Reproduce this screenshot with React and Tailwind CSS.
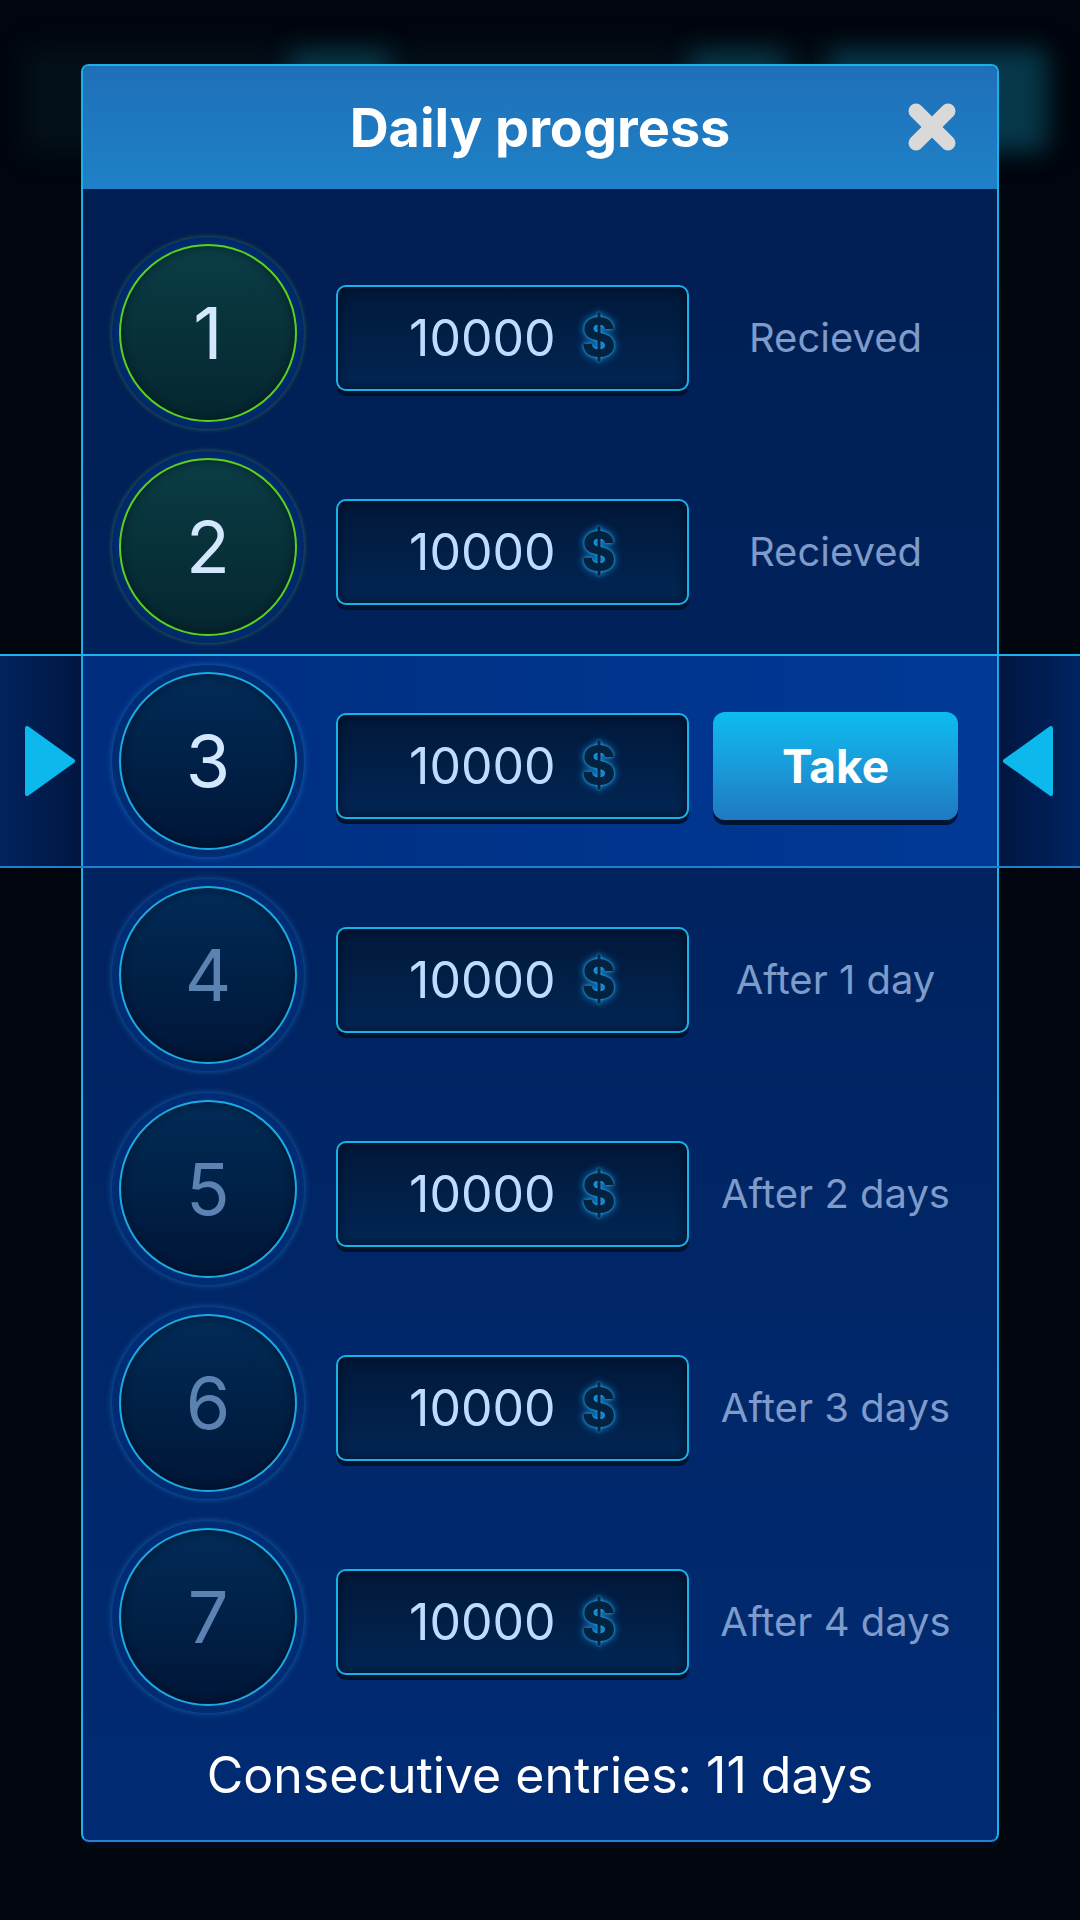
import React from 'react';

const days = [
  { n: 1, state: 'received', label: 'Recieved' },
  { n: 2, state: 'received', label: 'Recieved' },
  { n: 3, state: 'today' },
  { n: 4, state: 'locked', label: 'After 1 day' },
  { n: 5, state: 'locked', label: 'After 2 days' },
  { n: 6, state: 'locked', label: 'After 3 days' },
  { n: 7, state: 'locked', label: 'After 4 days' },
];

function DayCircle({ n, state }) {
  const received = state === 'received';
  return (
    <div
      className={
        received
          ? 'w-[192px] h-[192px] rounded-full bg-[#00296c] flex items-center justify-center shadow-[0_0_5px_rgba(110,200,60,0.45)]'
          : 'w-[192px] h-[192px] rounded-full bg-[#002c73] flex items-center justify-center shadow-[0_0_6px_rgba(40,150,230,0.55)]'
      }
    >
      <div
        className={
          received
            ? 'w-[178px] h-[178px] rounded-full border-2 border-[#58d11b] bg-gradient-to-b from-[#0b3d45] to-[#05262f] shadow-[inset_0_0_10px_rgba(0,0,0,0.45)] flex items-center justify-center'
            : 'w-[178px] h-[178px] rounded-full border-2 border-[#1aa9e2] bg-gradient-to-b from-[#022b56] to-[#001638] shadow-[inset_0_0_10px_rgba(0,0,0,0.45)] flex items-center justify-center'
        }
      >
        <span
          className={
            state === 'locked'
              ? 'text-[72px] leading-none text-[#5b82b1]'
              : 'text-[72px] leading-none text-[#d3e8ff]'
          }
        >
          {n}
        </span>
      </div>
    </div>
  );
}

function Amount() {
  return (
    <div className="w-[353px] h-[106px] rounded-[10px] border-2 border-[#17b3e8] bg-gradient-to-b from-[#01183a] to-[#022654] shadow-[0_5px_0_#01122d,inset_0_0_12px_rgba(0,0,0,0.5)] flex items-center justify-center gap-[26px]">
      <span className="text-[50px] leading-none text-[#bddcff]">10000</span>
      <span className="text-[52px] leading-none font-extrabold text-[#02223f] [text-shadow:0_0_3px_#22b8ff,0_0_8px_#1a94e6]">$</span>
    </div>
  );
}

function TakeButton() {
  return (
    <div className="w-[245px] h-[108px] rounded-[12px] bg-gradient-to-b from-[#0bbdf0] to-[#1f79c2] shadow-[0_5px_0_#011533] flex items-center justify-center">
      <span className="text-[46px] font-bold text-white leading-none">Take</span>
    </div>
  );
}

function RowContent({ day }) {
  return (
    <div className="h-full flex items-center pl-[29px]">
      <DayCircle n={day.n} state={day.state} />
      <div className="ml-[32px] mt-[10px]">
        <Amount />
      </div>
      <div className="ml-[24px] mt-[10px] w-[245px] flex items-center justify-center">
        {day.state === 'today' ? (
          <TakeButton />
        ) : (
          <span className="text-[40px] leading-none text-[#7e9bca] whitespace-nowrap">{day.label}</span>
        )}
      </div>
    </div>
  );
}

function Triangle({ dir }) {
  return (
    <svg width="52" height="72" viewBox="0 0 52 72">
      {dir === 'right' ? (
        <path d="M3 3 L49 36 L3 69 Z" fill="#0cb8ec" stroke="#0cb8ec" strokeWidth="4" strokeLinejoin="round" />
      ) : (
        <path d="M49 3 L3 36 L49 69 Z" fill="#0cb8ec" stroke="#0cb8ec" strokeWidth="4" strokeLinejoin="round" />
      )}
    </svg>
  );
}

export default function App() {
  return (
    <div className="relative w-[1080px] h-[1920px] overflow-hidden bg-[#01060e] font-['Inter',sans-serif]">
      {/* blurred ui behind the dialog */}
      <div className="absolute left-[26px] top-[48px] w-[1024px] h-[104px] rounded-lg bg-[#031019] blur-md" />
      <div className="absolute left-[290px] top-[50px] w-[100px] h-[90px] rounded-md bg-[#073746] blur-md" />
      <div className="absolute left-[690px] top-[50px] w-[95px] h-[90px] rounded-md bg-[#073746] blur-md" />
      <div className="absolute left-[830px] top-[50px] w-[215px] h-[100px] rounded-md bg-[#06384a] blur-md" />

      <div className="relative ml-[81px] mt-[64px] w-[918px] rounded-[8px] border-2 border-[#18b2e9] border-b-[#2a7fd0] bg-gradient-to-b from-[#001d50] to-[#002b73] shadow-[0_6px_0_rgba(0,10,30,0.9)]">
        <div className="relative h-[123px] rounded-t-[6px] bg-gradient-to-b from-[#1f70b8] to-[#1e81c7] flex items-center justify-center">
          <span className="text-[54px] font-bold text-white leading-none">Daily progress</span>
          <svg className="absolute right-[40px] top-[36px]" width="50" height="50" viewBox="0 0 50 50">
            <path d="M9 9 L41 41 M41 9 L9 41" stroke="#d9d9d9" strokeWidth="15" strokeLinecap="round" />
          </svg>
        </div>

        <div className="pt-[37px]">
          {days.map((day) =>
            day.state === 'today' ? (
              <div
                key={day.n}
                className="-mx-[83px] h-[214px] flex border-y-2 border-t-[#1ab4ea] border-b-[#1f7fcc]"
              >
                <div className="w-[81px] flex items-center pl-[24px] bg-gradient-to-r from-[#02245e] to-[#001640]">
                  <Triangle dir="right" />
                </div>
                <div className="w-[918px] border-x-2 border-[#1aa9e2] bg-gradient-to-r from-[#002d7d] to-[#003a98]">
                  <RowContent day={day} />
                </div>
                <div className="w-[81px] flex items-center pl-[3px] bg-gradient-to-r from-[#001640] to-[#002463]">
                  <Triangle dir="left" />
                </div>
              </div>
            ) : (
              <div key={day.n} className="h-[214px]">
                <RowContent day={day} />
              </div>
            )
          )}
        </div>

        <div className="h-[116px] pt-[26px] flex justify-center">
          <span className="text-[50px] leading-none text-white">Consecutive entries: 11 days</span>
        </div>
      </div>
    </div>
  );
}
